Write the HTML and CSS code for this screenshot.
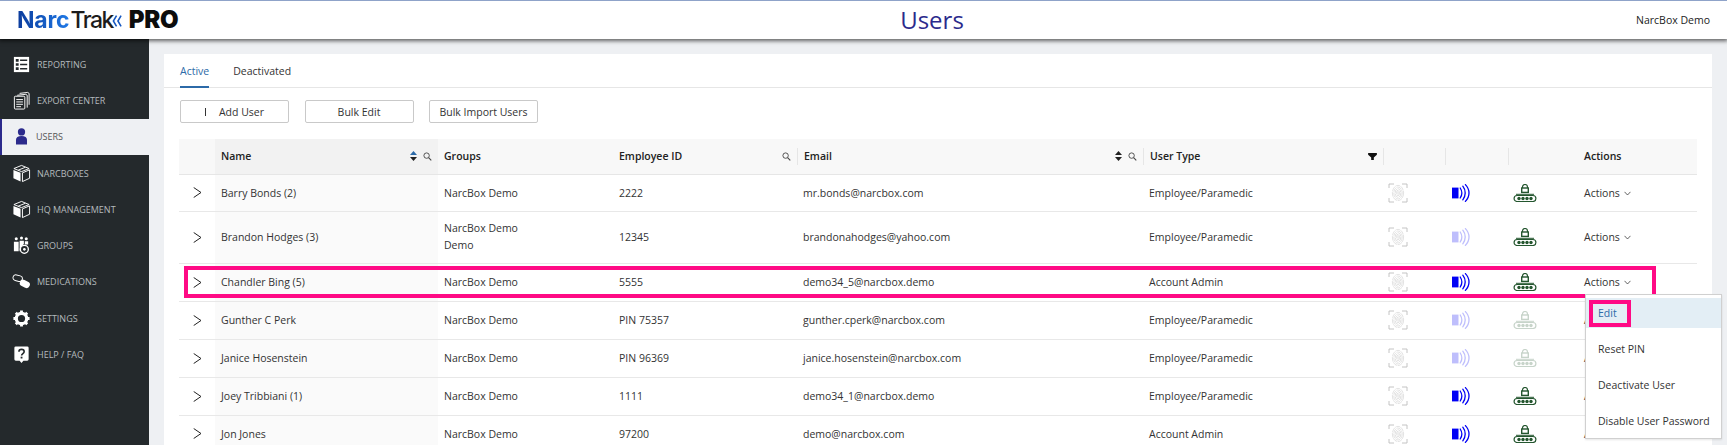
FILE: index.html
```html
<!DOCTYPE html>
<html lang="en">
<head>
<meta charset="utf-8">
<title>Users</title>
<link rel="stylesheet" href="styles.css">
</head>
<body>
<svg class="defs" width="0" height="0" aria-hidden="true">
  <symbol id="fp" viewBox="0 0 20 20">
    <path d="M1 5V1h5M14 1h5v4M1 15v4h5M19 15v4h-5" fill="none" stroke="#bdbdbd" stroke-width=".9"/>
    <g fill="none" stroke="#c6c6c6" stroke-width=".5" stroke-dasharray="5 .6">
      <ellipse cx="10" cy="10" rx="5.600" ry="7.600"/>
      <ellipse cx="10" cy="10" rx="4.200" ry="6"/>
      <ellipse cx="10" cy="10" rx="2.800" ry="4.400"/>
      <ellipse cx="10" cy="10" rx="1.400" ry="2.800"/>
      <path d="M10 8.500v3"/>
    </g>
  </symbol>
  <symbol id="nfc" viewBox="0 0 18 18">
    <rect x="0" y="3.600" width="6.500" height="10.800" fill="#0000f5"/>
    <g fill="none" stroke="#0000f5" stroke-width="1.300" stroke-linecap="round">
      <path d="M8.200 4c2 3 2 7 0 10"/>
      <path d="M10.800 2.200c3.200 4 3.200 9.600 0 13.600"/>
      <path d="M13.400.6c4.800 5 4.800 11.800 0 16.800"/>
    </g>
  </symbol>
  <symbol id="pin" viewBox="0 0 24 18">
    <path d="M9.500 4V3a2.500 2.500 0 0 1 5 0v1" fill="none" stroke="#24562f" stroke-width="1.200"/>
    <rect x="8.700" y="4" width="6.600" height="4.400" fill="none" stroke="#24562f" stroke-width="1.400"/>
    <path d="M3 10.300h18" stroke="#24562f" stroke-width="1"/>
    <rect x="1.100" y="11.500" width="21.800" height="6" rx="3" fill="none" stroke="#24562f" stroke-width="1.200"/>
    <g fill="#24562f">
      <circle cx="6" cy="14.500" r="1.700"/><circle cx="10" cy="14.500" r="1.700"/><circle cx="14" cy="14.500" r="1.700"/><circle cx="18" cy="14.500" r="1.700"/>
    </g>
  </symbol>
  <symbol id="mag" viewBox="0 0 10 10">
    <circle cx="4" cy="4" r="3" fill="none" stroke="#444" stroke-width="1"/>
    <path d="M6.200 6.200L9.200 9.200" stroke="#444" stroke-width="1.200"/>
  </symbol>
  <symbol id="chev" viewBox="0 0 9 11">
    <path d="M.7.500l7.300 5-7.300 5" fill="none" stroke="#222" stroke-width="1"/>
  </symbol>
  <symbol id="down" viewBox="0 0 8 5">
    <path d="M.6.600L4 4.200 7.400.6" fill="none" stroke="#222" stroke-width=".8"/>
  </symbol>
  <symbol id="cube" viewBox="0 0 20 20">
    <path d="M10 1.500L2 4.800 10 8l8-3.200z" fill="none" stroke="#fff" stroke-width="1"/>
    <path d="M1.500 6.200v8.800L9 18.500V9.300z" fill="#fff"/>
    <path d="M11 9.300v9.200l7.500-3.500V6.200z" fill="none" stroke="#fff" stroke-width="1"/>
    <path d="M14 3.500L6.500 6.500" stroke="#fff" stroke-width="1"/>
  </symbol>
</svg>

<div class="page">
  <header class="topbar">
    <div class="logo">
      <span class="logo-narc">Narc</span><span class="logo-trak">Trak</span><svg class="logo-chev" viewBox="0 0 11 16" aria-hidden="true"><path d="M5 2L1.500 8 5 14M10 2L6.500 8l3.500 6" fill="none" stroke="#1557c0" stroke-width="1.700"/></svg><span class="logo-pro">PRO</span>
    </div>
    <h1 class="title">Users</h1>
    <div class="account">NarcBox Demo</div>
  </header>

  <div class="shell">
    <nav class="sidebar">
      <a class="nav-item">
        <svg class="nav-icon" viewBox="0 0 20 20"><rect x="2" y="2" width="16" height="16" fill="#fff"/><path d="M4 4.200h3v2.800H4zM4 8.600h3v2.800H4zM4 13h3v2.800H4zM8.500 4.800H16v1.600H8.500zM8.500 9.200H16v1.600H8.500zM8.500 13.600H16v1.600H8.500z" fill="#24292c"/></svg>
        <span>Reporting</span>
      </a>
      <a class="nav-item">
        <svg class="nav-icon" viewBox="0 0 20 20"><g fill="none" stroke="#fff" stroke-width="1"><path d="M8 2.500L16.500 1.500l1.500 1v12"/><path d="M5.500 4.500L14.500 3.500l1.500 1v13"/><rect x="2.500" y="5.500" width="11" height="13.500" rx="1"/><path d="M4.500 9h7M4.500 11.500h7M4.500 14h7M4.500 16.500h5"/></g></svg>
        <span>Export Center</span>
      </a>
      <a class="nav-item is-active">
        <svg class="nav-icon" viewBox="0 0 20 20"><circle cx="10" cy="5.200" r="3.800" fill="#2b2a8c"/><path d="M4.200 18.500v-5c0-2.500 2-4 5.800-4s5.800 1.500 5.800 4v5z" fill="#2b2a8c"/></svg>
        <span>Users</span>
      </a>
      <a class="nav-item"><svg class="nav-icon"><use href="#cube"/></svg><span>NarcBoxes</span></a>
      <a class="nav-item"><svg class="nav-icon"><use href="#cube"/></svg><span>HQ Management</span></a>
      <a class="nav-item">
        <svg class="nav-icon" viewBox="0 0 20 20"><g fill="#fff"><circle cx="4.500" cy="3" r="1.600"/><circle cx="10" cy="2" r="1.600"/><circle cx="15" cy="3" r="1.600"/><path d="M2 6h5v10H2zM8 5h4.500v3.500L9 12v4H8zM13.500 5.500H17V9h-3.500z"/></g><circle cx="13" cy="14" r="4.200" fill="#24292c" stroke="#fff" stroke-width="1.400"/><circle cx="13" cy="14" r="1.400" fill="#fff"/></svg>
        <span>Groups</span>
      </a>
      <a class="nav-item">
        <svg class="nav-icon" viewBox="0 0 20 20"><rect x="1" y="3.500" width="10" height="6" rx="3" transform="rotate(15 6 6.500)" fill="none" stroke="#fff" stroke-width="1"/><rect x="8" y="9" width="11" height="7" rx="3.500" transform="rotate(25 13.500 12.500)" fill="#fff"/></svg>
        <span>Medications</span>
      </a>
      <a class="nav-item">
        <svg class="nav-icon" viewBox="0 0 20 20"><circle cx="10" cy="10" r="5.500" fill="none" stroke="#fff" stroke-width="3.400"/><path d="M10 1.500V5M10 15v3.500M1.500 10H5M15 10h3.500M4 4l2.500 2.500M13.500 13.500L16 16M16 4l-2.500 2.500M6.500 13.500L4 16" stroke="#fff" stroke-width="3"/></svg>
        <span>Settings</span>
      </a>
      <a class="nav-item">
        <svg class="nav-icon" viewBox="0 0 20 20"><path d="M4 1.500h12A1.500 1.500 0 0 1 17.500 3v12a1.500 1.500 0 0 1-1.500 1.500h-4L10 19l-2-2.500H4A1.500 1.500 0 0 1 2.500 15V3A1.500 1.500 0 0 1 4 1.500z" fill="#fff"/><path d="M7.300 7c0-3.200 5.500-3.200 5.500 0 0 2-2.700 2-2.700 4" fill="none" stroke="#24292c" stroke-width="1.700"/><rect x="9.100" y="12.300" width="1.900" height="1.900" fill="#24292c"/></svg>
        <span>Help / FAQ</span>
      </a>
    </nav>

    <main class="main">
      <section class="card">
        <div class="tabs">
          <a class="tab is-current">Active</a>
          <a class="tab">Deactivated</a>
        </div>
        <div class="toolbar">
          <button class="btn btn-add"><i class="btn-glyph"></i>Add User</button>
          <button class="btn">Bulk Edit</button>
          <button class="btn">Bulk Import Users</button>
        </div>
        <table class="grid">
          <colgroup>
            <col class="c-exp"><col class="c-name"><col class="c-group"><col class="c-emp"><col class="c-mail"><col class="c-type"><col class="c-fp"><col class="c-nfc"><col class="c-pin"><col class="c-act">
          </colgroup>
          <thead>
            <tr>
              <th></th>
              <th class="sorted"><div class="th-in">Name<span class="tools"><svg class="sort" viewBox="0 0 7 10"><path d="M3.500 0L7 4H0z" fill="#2c6aa8"/><path d="M3.500 10L0 6h7z" fill="#222"/></svg><svg class="mag"><use href="#mag"/></svg></span></div></th>
              <th><div class="th-in">Groups</div></th>
              <th><div class="th-in">Employee ID<span class="tools"><svg class="mag"><use href="#mag"/></svg></span></div></th>
              <th><div class="th-in sep">Email<span class="tools"><svg class="sort" viewBox="0 0 7 10"><path d="M3.500 0L7 4H0z" fill="#222"/><path d="M3.500 10L0 6h7z" fill="#222"/></svg><svg class="mag"><use href="#mag"/></svg></span></div></th>
              <th><div class="th-in sep">User Type<span class="tools"><svg class="filter" viewBox="0 0 10 8"><path d="M0 0h10v2L6.500 5v3h-3V5L0 2z" fill="#111"/></svg></span></div></th>
              <th><div class="th-in sep"></div></th>
              <th><div class="th-in sep"></div></th>
              <th><div class="th-in sep"></div></th>
              <th><div class="th-in">Actions</div></th>
            </tr>
          </thead>
          <tbody>
            <tr class="short">
              <td class="exp"><svg class="chev"><use href="#chev"/></svg></td>
              <td class="name">Barry Bonds (2)</td><td>NarcBox Demo</td><td>2222</td><td>mr.bonds@narcbox.com</td><td>Employee/Paramedic</td>
              <td class="ic ic-fp"><svg class="i-fp"><use href="#fp"/></svg></td>
              <td class="ic ic-nfc"><svg class="i-nfc"><use href="#nfc"/></svg></td>
              <td class="ic ic-pin"><svg class="i-pin"><use href="#pin"/></svg></td>
              <td>Actions <svg class="down"><use href="#down"/></svg></td>
            </tr>
            <tr class="tall">
              <td class="exp"><svg class="chev"><use href="#chev"/></svg></td>
              <td class="name">Brandon Hodges (3)</td><td class="stack">NarcBox Demo<br>Demo</td><td>12345</td><td>brandonahodges@yahoo.com</td><td>Employee/Paramedic</td>
              <td class="ic ic-fp"><svg class="i-fp"><use href="#fp"/></svg></td>
              <td class="ic ic-nfc"><svg class="i-nfc off"><use href="#nfc"/></svg></td>
              <td class="ic ic-pin"><svg class="i-pin"><use href="#pin"/></svg></td>
              <td>Actions <svg class="down"><use href="#down"/></svg></td>
            </tr>
            <tr>
              <td class="exp"><svg class="chev"><use href="#chev"/></svg></td>
              <td class="name">Chandler Bing (5)</td><td>NarcBox Demo</td><td>5555</td><td>demo34_5@narcbox.demo</td><td>Account Admin</td>
              <td class="ic ic-fp"><svg class="i-fp"><use href="#fp"/></svg></td>
              <td class="ic ic-nfc"><svg class="i-nfc"><use href="#nfc"/></svg></td>
              <td class="ic ic-pin"><svg class="i-pin"><use href="#pin"/></svg></td>
              <td>Actions <svg class="down"><use href="#down"/></svg></td>
            </tr>
            <tr>
              <td class="exp"><svg class="chev"><use href="#chev"/></svg></td>
              <td class="name">Gunther C Perk</td><td>NarcBox Demo</td><td>PIN 75357</td><td>gunther.cperk@narcbox.com</td><td>Employee/Paramedic</td>
              <td class="ic ic-fp"><svg class="i-fp"><use href="#fp"/></svg></td>
              <td class="ic ic-nfc"><svg class="i-nfc off"><use href="#nfc"/></svg></td>
              <td class="ic ic-pin"><svg class="i-pin off"><use href="#pin"/></svg></td>
              <td>Actions <svg class="down"><use href="#down"/></svg></td>
            </tr>
            <tr>
              <td class="exp"><svg class="chev"><use href="#chev"/></svg></td>
              <td class="name">Janice Hosenstein</td><td>NarcBox Demo</td><td>PIN 96369</td><td>janice.hosenstein@narcbox.com</td><td>Employee/Paramedic</td>
              <td class="ic ic-fp"><svg class="i-fp"><use href="#fp"/></svg></td>
              <td class="ic ic-nfc"><svg class="i-nfc off"><use href="#nfc"/></svg></td>
              <td class="ic ic-pin"><svg class="i-pin off"><use href="#pin"/></svg></td>
              <td>Actions <svg class="down"><use href="#down"/></svg></td>
            </tr>
            <tr>
              <td class="exp"><svg class="chev"><use href="#chev"/></svg></td>
              <td class="name">Joey Tribbiani (1)</td><td>NarcBox Demo</td><td>1111</td><td>demo34_1@narcbox.demo</td><td>Employee/Paramedic</td>
              <td class="ic ic-fp"><svg class="i-fp"><use href="#fp"/></svg></td>
              <td class="ic ic-nfc"><svg class="i-nfc"><use href="#nfc"/></svg></td>
              <td class="ic ic-pin"><svg class="i-pin"><use href="#pin"/></svg></td>
              <td>Actions <svg class="down"><use href="#down"/></svg></td>
            </tr>
            <tr class="short">
              <td class="exp"><svg class="chev"><use href="#chev"/></svg></td>
              <td class="name">Jon Jones</td><td>NarcBox Demo</td><td>97200</td><td>demo@narcbox.com</td><td>Account Admin</td>
              <td class="ic ic-fp"><svg class="i-fp"><use href="#fp"/></svg></td>
              <td class="ic ic-nfc"><svg class="i-nfc"><use href="#nfc"/></svg></td>
              <td class="ic ic-pin"><svg class="i-pin"><use href="#pin"/></svg></td>
              <td>Actions <svg class="down"><use href="#down"/></svg></td>
            </tr>
          </tbody>
        </table>
      </section>
    </main>
  </div>

  <div class="row-mark"></div>
  <ul class="menu">
    <li class="menu-item is-hover">Edit</li>
    <li class="menu-item">Reset PIN</li>
    <li class="menu-item">Deactivate User</li>
    <li class="menu-item">Disable User Password</li>
  </ul>
  <div class="edit-mark"></div>
</div>
</body>
</html>
```
FILE: styles.css
```css
* { box-sizing: border-box; }
html, body { margin: 0; height: 100%; overflow: hidden; }
body { font-family: "Open Sans", "Liberation Sans", sans-serif; font-size: 10.500px; color: #333; background: #eef0f3; }
.defs { position: absolute; }
.page { position: relative; width: 1727px; height: 445px; overflow: hidden; }

.topbar { position: relative; z-index: 2; height: 39px; background: #fff; border-top: 1px solid #8fa3c9; display: grid; grid-template-columns: 132px 1fr 12px; align-items: center; box-shadow: 0 1px 4px 1px rgba(0,0,0,.6); padding-left: 17px; }
.logo { display: flex; align-items: center; font-family: Inter, "Liberation Sans", sans-serif; font-size: 23px; line-height: 1; height: 38px; white-space: nowrap; }
.logo-narc { font-weight: 700; letter-spacing: -.2px; background: linear-gradient(90deg, #0c3c9c, #1e78e6); -webkit-background-clip: text; background-clip: text; color: transparent; }
.logo-trak { font-weight: 500; color: #1c1c1c; margin-left: 1px; letter-spacing: -1.500px; }
.logo-chev { width: 10px; height: 16px; flex: none; margin-left: -1px; margin-top: 2px; }
.logo-pro { font-weight: 900; font-size: 24px; color: #0c0c0c; margin-left: 7px; letter-spacing: -.3px; }
.title { margin: 0; font-size: 24px; font-weight: 400; color: #2b2a8c; line-height: 38px; text-align: center; }
.account { justify-self: end; margin-right: 17px; font-size: 10.500px; color: #222; white-space: nowrap; }

.shell { display: flex; height: 406px; }
.sidebar { width: 149px; flex: none; background: #24292c; padding-top: 7px; }
.nav-item { display: flex; align-items: center; height: 36.300px; padding-left: 12px; gap: 6px; color: #b4b9bc; font-size: 9px; text-transform: uppercase; }
.nav-icon { width: 19px; height: 19px; flex: none; }
.nav-item.is-active { background: #eef0f3; color: #555; border-left: 2px solid #2b2a8c; padding-left: 10px; gap: 5px; }

.main { flex: 1; padding: 15px 15px 0; min-width: 0; }
.card { background: #fff; height: 100%; overflow: hidden; }
.tabs { display: flex; gap: 24px; height: 34px; padding-left: 16px; border-bottom: 1px solid #e6e6e6; }
.tab { height: 34px; padding-top: 10px; color: #333; line-height: 15px; }
.tab.is-current { color: #2c6aa8; border-bottom: 2px solid #2c6aa8; }
.toolbar { display: flex; gap: 15.500px; padding: 12px 16px 16px; }
.btn { width: 109px; height: 23px; padding: 0; background: #fff; border: 1px solid #c9c9c9; border-radius: 2px; font: 10.500px "Open Sans", sans-serif; color: #333; }
.btn-add { display: flex; align-items: center; justify-content: center; gap: 13px; }
.btn-glyph { width: 1px; height: 8px; background: #333; }

.grid { width: 1518px; margin-left: 15px; table-layout: fixed; border-collapse: collapse; }
.c-exp { width: 36px; } .c-name { width: 223px; } .c-group { width: 175px; } .c-emp { width: 184px; } .c-mail { width: 346px; } .c-type { width: 240px; } .c-fp { width: 62px; } .c-nfc { width: 63px; } .c-pin { width: 70px; } .c-act { width: 119px; }
th { height: 35px; background: #f8f8f8; border-bottom: 1px solid #e6e6e6; padding: 0; text-align: left; font-weight: 600; font-size: 10.500px; color: #222; }
th.sorted { background: #f2f2f2; }
.th-in { display: flex; align-items: center; height: 17px; padding-left: 6px; padding-right: 6px; }
.th-in.sep { border-left: 1px solid #e6e6e6; }
.tools { margin-left: auto; display: flex; align-items: center; gap: 6px; }
.sort { width: 7px; height: 10px; }
.mag { width: 9px; height: 9px; }
.filter { width: 9px; height: 7px; }
td { height: 38px; border-bottom: 1px solid #e8e8e8; padding: 0 0 0 6px; font-size: 10.500px; color: #333; white-space: nowrap; }
tr.short td { height: 37px; }
tr.tall td { height: 52px; }
td.stack { line-height: 17px; }
td.name { background: #fafafa; padding-left: 6px; }
td.exp { padding-left: 14px; }
td.ic { padding: 0; }
td.ic-fp { padding-left: 5px; }
td.ic-nfc { padding-left: 7px; }
td.ic-pin { padding-left: 5px; }
.chev { display: block; width: 9px; height: 11px; }
.i-fp { display: block; width: 20px; height: 20px; }
.i-nfc { display: block; width: 18px; height: 18px; }
.i-pin { display: block; width: 24px; height: 18px; }
.off { opacity: .25; }
.down { width: 7px; height: 5px; margin-left: 1px; vertical-align: 1px; }

.row-mark { position: absolute; left: 184px; top: 266px; width: 1472px; height: 32px; border: 4px solid #ff0a85; }
.menu { position: absolute; left: 1585px; top: 294px; width: 137px; height: 145px; margin: 0; padding: 3px 0 0; list-style: none; background: #fff; border: 1px solid #d0d0d0; box-shadow: 0 1px 2px rgba(0,0,0,.1); }
.menu-item { height: 36px; padding-left: 12px; display: flex; align-items: center; color: #333; }
.menu-item.is-hover { height: 30px; margin-bottom: 3px; background: #e3eef5; color: #2c6aa8; }
.edit-mark { position: absolute; left: 1589px; top: 300px; width: 42px; height: 27px; border: 4px solid #ff0a85; }
```
